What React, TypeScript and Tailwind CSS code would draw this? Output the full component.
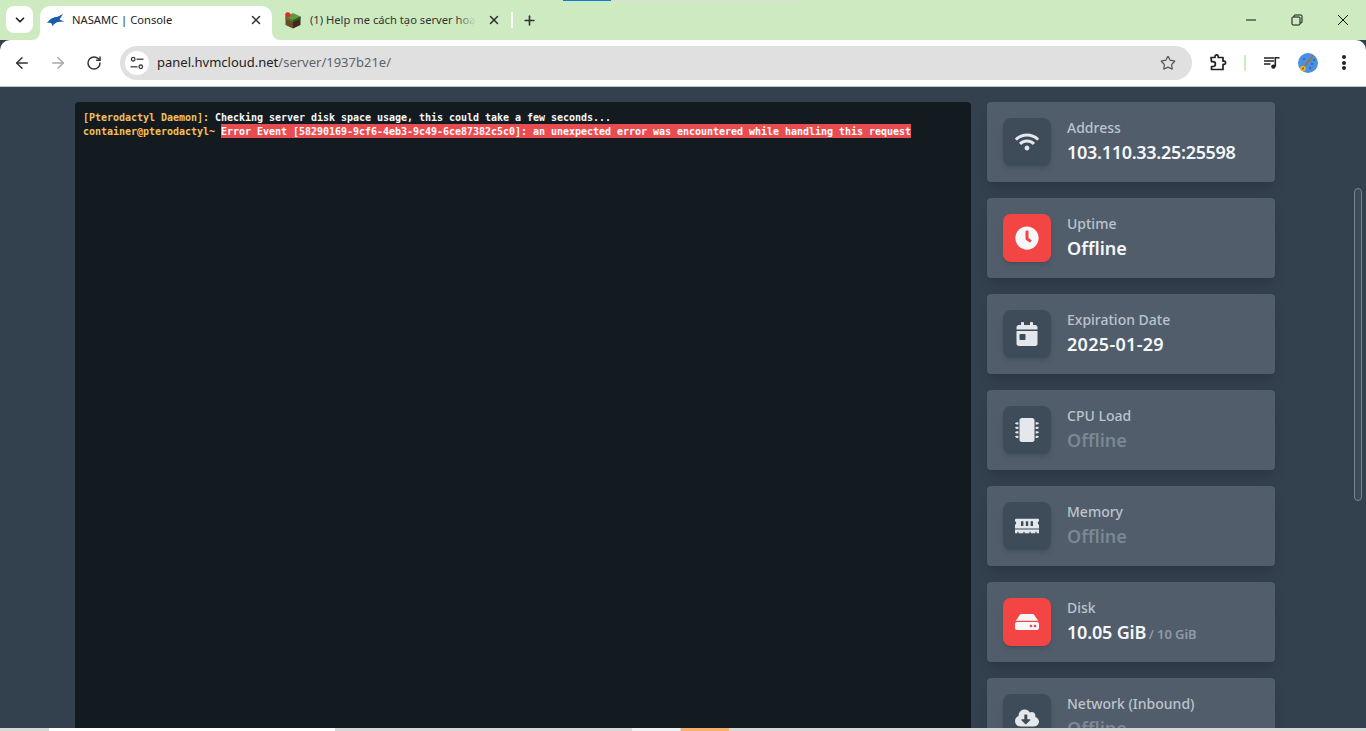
import React from "react";
import { FaWifi, FaClock, FaCalendarDay, FaMicrochip, FaMemory, FaHdd, FaCloudDownloadAlt } from "react-icons/fa";
import { ChevronDown, X, Plus, ArrowLeft, ArrowRight, RotateCw, Star } from "lucide-react";

type Stat = { label: string; icon: React.ReactNode; red?: boolean; value: React.ReactNode; dim?: boolean };

const stats: Stat[] = [
  { label: "Address", icon: <FaWifi />, value: <span className="tracking-[-0.3px]">103.110.33.25:25598</span> },
  { label: "Uptime", icon: <FaClock />, red: true, value: "Offline" },
  { label: "Expiration Date", icon: <FaCalendarDay />, value: <span className="tracking-[0.3px]">2025-01-29</span> },
  { label: "CPU Load", icon: <FaMicrochip />, value: "Offline", dim: true },
  { label: "Memory", icon: <FaMemory />, value: "Offline", dim: true },
  {
    label: "Disk",
    icon: <FaHdd />,
    red: true,
    value: (
      <>
        <span className="tracking-[-0.2px]">10.05 GiB</span>{" "}
        <span className="-ml-[2px] text-[13px] leading-none font-semibold tracking-[-0.1px] text-[#8f9aa6]">/ 10 GiB</span>
      </>
    ),
  },
  { label: "Network (Inbound)", icon: <FaCloudDownloadAlt />, value: "Offline", dim: true },
];

function StatCard({ s }: { s: Stat }) {
  return (
    <div className="flex h-20 shrink-0 items-center rounded bg-[#515d6a] p-4 shadow-lg">
      <div
        className={`flex h-12 w-12 shrink-0 items-center justify-center rounded-lg text-[24px] shadow-md ${
          s.red ? "bg-[#f44545] text-[#f5f7fa]" : "bg-[#3e4c59] text-[#e4e7eb]"
        }`}
      >
        {s.icon}
      </div>
      <div className="ml-4 flex flex-col">
        <p className="text-[14px] leading-5 font-medium text-[#bcc4ce]">{s.label}</p>
        <p className={`text-[18px] leading-7 font-semibold ${s.dim ? "text-[#7b8794]" : "text-[#f5f7fa]"}`}>{s.value}</p>
      </div>
    </div>
  );
}

function Concave({ side }: { side: "l" | "r" }) {
  return (
    <svg
      width="8"
      height="8"
      viewBox="0 0 8 8"
      className={`absolute bottom-0 ${side === "l" ? "-left-2" : "-right-2"}`}
    >
      <path d={side === "l" ? "M8 0V8H0A8 8 0 0 0 8 0Z" : "M0 0V8H8A8 8 0 0 1 0 0Z"} fill="#fff" />
    </svg>
  );
}

function Bird() {
  return (
    <svg width="17" height="13" viewBox="0 0 17 13">
      <path d="M0 9C3 4.5 7 3 10 3L16 0L12.5 5.5L17 7.5L11 8C9 8.2 7 10 5 12.5C6 9.5 4 8.2 0 9Z" fill="#1a5cab" />
    </svg>
  );
}

function GrassBlock() {
  return (
    <svg width="16" height="17" viewBox="0 0 16 17">
      <path d="M8 1L15.5 4.5L8 8L0.5 4.5Z" fill="#5f9a3c" />
      <path d="M0.5 4.5L8 8V16.5L0.5 13Z" fill="#6b4a2c" />
      <path d="M15.5 4.5L8 8V16.5L15.5 13Z" fill="#3f2b1a" />
      <path d="M0.5 4.5L8 8V10L0.5 7Z" fill="#4b7d2e" />
      <path d="M15.5 4.5L8 8V10L15.5 7Z" fill="#365c22" />
      <circle cx="2.8" cy="2.8" r="2.6" fill="#e8262b" />
    </svg>
  );
}

function Avatar() {
  return (
    <svg width="20" height="20" viewBox="0 0 20 20">
      <circle cx="10" cy="10" r="10" fill="#4a90e2" />
      <path d="M15 2.5L6 14" stroke="#a9741d" strokeWidth="1.6" />
      <circle cx="5" cy="15.5" r="2.8" fill="#e8b321" />
      <circle cx="5" cy="15.5" r="1" fill="#7a5510" />
      <circle cx="6" cy="6" r="0.8" fill="#1f3f70" />
      <circle cx="14" cy="11" r="0.8" fill="#1f3f70" />
      <circle cx="16" cy="7" r="0.8" fill="#1f3f70" />
      <circle cx="12" cy="15" r="0.8" fill="#1f3f70" />
    </svg>
  );
}

function TuneIcon() {
  return (
    <svg width="14" height="14" viewBox="0 0 14 14" fill="none" stroke="#3c4043" strokeWidth="1.3">
      <circle cx="3.2" cy="3.2" r="1.8" />
      <path d="M6.5 3.2H13.5" />
      <circle cx="10.8" cy="10.8" r="1.8" />
      <path d="M0.5 10.8H7.5" />
    </svg>
  );
}

function RestoreIcon() {
  return (
    <svg width="12" height="12" viewBox="0 0 12 12" fill="none" stroke="#111" strokeWidth="1">
      <rect x="1" y="3" width="8" height="8" rx="1" />
      <path d="M3 3V2A1 1 0 0 1 4 1H10A1 1 0 0 1 11 2V8A1 1 0 0 1 10 9H9" />
    </svg>
  );
}

function MinIcon() {
  return (
    <svg width="12" height="12" viewBox="0 0 12 12" stroke="#111" strokeWidth="1">
      <path d="M1 6H11" />
    </svg>
  );
}

function CloseIcon() {
  return (
    <svg width="12" height="12" viewBox="0 0 12 12" stroke="#111" strokeWidth="1">
      <path d="M1 1L11 11M11 1L1 11" />
    </svg>
  );
}

function ExtensionIcon() {
  return (
    <svg width="17" height="17" viewBox="0 0 17 17" fill="none" stroke="#222" strokeWidth="1.7" strokeLinejoin="round">
      <path d="M1 3.5H5V2.5A1.6 1.6 0 0 1 8.2 2.5V3.5H13V7.2H14A1.6 1.6 0 0 1 14 10.4H13V15.5H1.5V12.5H3A2.4 2.4 0 0 0 3 7.7H1.5Z" />
    </svg>
  );
}

function QueueMusicIcon() {
  return (
    <svg width="16" height="12" viewBox="0 0 16 12" fill="none" stroke="#222" strokeWidth="1.4">
      <path d="M0 1H10M0 4H10M0 7H6.5" />
      <path d="M11.3 9.5V0.8H15.5" strokeWidth="1.6" />
      <circle cx="9.4" cy="9.6" r="2.2" fill="#222" stroke="none" />
    </svg>
  );
}

export default function App() {
  return (
    <div className="relative flex h-[731px] w-[1366px] flex-col overflow-hidden bg-[#33404d] font-['Noto_Sans',sans-serif]">
      {/* Loading strip over the very top */}
      <div className="absolute top-0 left-[563px] z-10 flex h-px">
        <div className="w-12 bg-[#0b7fd4]" />
        <div className="w-[192px] bg-[#dcdcdc]" />
      </div>

      {/* Tab strip */}
      <div className="flex h-10 shrink-0 items-end bg-[#cdeac0] pl-1.5">
        <div className="mb-[7px] flex h-[27px] w-[27px] items-center justify-center rounded-lg bg-white">
          <ChevronDown size={14} strokeWidth={3} className="text-[#222]" />
        </div>
        <div className="relative ml-[7px] flex h-[34px] w-[232px] items-center rounded-t-[10px] bg-white pr-[9px] pb-[6px] pl-[7px]">
          <Concave side="l" />
          <Concave side="r" />
          <Bird />
          <span className="ml-2 flex-1 text-[11.2px] text-[#222]">NASAMC | Console</span>
          <X size={14} strokeWidth={2.6} className="text-[#333]" />
        </div>
        <div className="flex h-[34px] w-[241px] items-center pb-[6px] pl-[13px]">
          <GrassBlock />
          <span className="relative ml-[9px] w-[166px] text-[11.2px] whitespace-nowrap text-[#333]">
            (1) Help me cách tạo server hoạ
            <span className="absolute top-0 right-0 bottom-0 w-5 bg-gradient-to-l from-[#cdeac0] to-transparent" />
          </span>
          <span className="ml-[11px]">
            <X size={14} strokeWidth={2.6} className="text-[#333]" />
          </span>
          <span className="ml-auto h-4 w-0.5 bg-white" />
        </div>
        <div className="mb-[12px] ml-[9px] flex items-center">
          <Plus size={15} strokeWidth={2.6} className="text-[#333]" />
        </div>
        <div className="mb-[14px] ml-auto flex items-center">
          <div className="flex w-[46px] justify-center">
            <MinIcon />
          </div>
          <div className="flex w-[46px] justify-center">
            <RestoreIcon />
          </div>
          <div className="flex w-[46px] justify-center">
            <CloseIcon />
          </div>
        </div>
      </div>

      {/* Toolbar */}
      <div className="flex h-[47px] shrink-0 items-center rounded-t-[10px] border-b border-[#c4c7c5] bg-white pb-px pl-[13px]">
        <ArrowLeft size={18} strokeWidth={2} className="text-[#333]" />
        <ArrowRight size={18} strokeWidth={2} className="ml-[18px] text-[#a8a8a8]" />
        <RotateCw size={16} strokeWidth={2.2} className="ml-[19px] text-[#333]" />
        <div className="ml-[18px] flex h-[34px] w-[1072px] items-center rounded-full bg-[#e0e0e0] pr-4 pl-[5px]">
          <div className="flex h-6 w-6 items-center justify-center rounded-full bg-white">
            <TuneIcon />
          </div>
          <span className="ml-[8px] text-[13px] text-[#222]">
            panel.hvmcloud.net<span className="text-[#5f6368]">/server/1937b21e/</span>
          </span>
          <Star size={16} strokeWidth={1.8} className="ml-auto text-[#555]" />
        </div>
        <span className="ml-[18px]">
          <ExtensionIcon />
        </span>
        <span className="ml-[17px] h-4 w-0.5 bg-[#cdeac0]" />
        <span className="ml-[18px]">
          <QueueMusicIcon />
        </span>
        <span className="ml-[18px]">
          <Avatar />
        </span>
        <div className="ml-[24px] flex flex-col gap-[1.5px]">
          <span className="h-1 w-1 rounded-full bg-[#222]" />
          <span className="h-1 w-1 rounded-full bg-[#222]" />
          <span className="h-1 w-1 rounded-full bg-[#222]" />
        </div>
      </div>

      {/* Page */}
      <div className="relative flex min-h-0 flex-1 gap-4 overflow-hidden pt-[15px] pl-[75px]">
        <div className="h-[800px] w-[896px] shrink-0 rounded bg-[#131a20] p-2 font-['DejaVu_Sans_Mono',monospace] text-[10px] font-bold tracking-[-0.02px] whitespace-pre text-[#f5f7fa]">
          <div className="h-[14px] leading-[16px]">
            <span className="text-[#f0c05f]">[Pterodactyl Daemon]:</span> Checking server disk space usage, this could take a few seconds...
          </div>
          <div className="flex h-[14px] leading-[16px]">
            <span className="mr-[6px] text-[#f7c052]">container@pterodactyl~</span>
            <span className="h-[14px] bg-[#e84c50] text-white">
              Error Event [58290169-9cf6-4eb3-9c49-6ce87382c5c0]: an unexpected error was encountered while handling this request
            </span>
          </div>
        </div>
        <div className="flex w-72 shrink-0 flex-col gap-4">
          {stats.map((s) => (
            <StatCard key={s.label} s={s} />
          ))}
        </div>
        {/* Overlay scrollbar */}
        <div className="absolute top-[101px] right-[4px] h-[313px] w-2 rounded-full border border-[#78848f] bg-[#3e4a57]" />
      </div>

      {/* Bottom strip */}
      <div className="flex h-[3px] shrink-0 bg-[#d8d8d6]">
        <div className="ml-[49px] w-[286px] bg-white" />
        <div className="ml-[297px] w-[48px] bg-[#f1f1f1]" />
        <div className="ml-px w-[48px] bg-[#f7b070]" />
      </div>
    </div>
  );
}
